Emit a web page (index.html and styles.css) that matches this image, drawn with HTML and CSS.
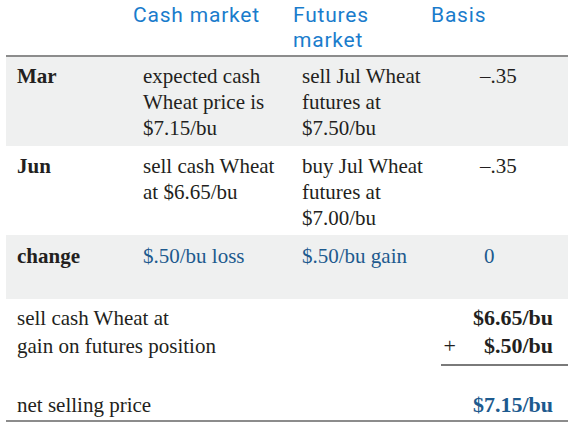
FILE: index.html
```html
<!DOCTYPE html>
<html>
<head>
<meta charset="utf-8">
<link rel="stylesheet" href="styles.css">
</head>
<body>
<div class="sheet">
  <div class="head">
    <div></div>
    <div class="h">Cash market</div>
    <div class="h">Futures<br>market</div>
    <div class="h">Basis</div>
  </div>
  <div class="row shade r-mar">
    <div class="lbl">Mar</div>
    <div>expected cash<br>Wheat price is<br>$7.15/bu</div>
    <div>sell Jul Wheat<br>futures at<br>$7.50/bu</div>
    <div class="basis">–.35</div>
  </div>
  <div class="row r-jun">
    <div class="lbl">Jun</div>
    <div>sell cash Wheat<br>at $6.65/bu</div>
    <div>buy Jul Wheat<br>futures at<br>$7.00/bu</div>
    <div class="basis">–.35</div>
  </div>
  <div class="row shade r-chg">
    <div class="lbl">change</div>
    <div class="blue">$.50/bu loss</div>
    <div class="blue">$.50/bu gain</div>
    <div class="basis blue zero">0</div>
  </div>
  <div class="summary">
    <div class="sline">
      <span>sell cash Wheat at</span>
      <span class="val">$6.65/bu</span>
    </div>
    <div class="sline">
      <span>gain on futures position</span>
      <span class="val"><span class="plus">+</span>$.50/bu</span>
    </div>
    <div class="rule"></div>
    <div class="sline total">
      <span>net selling price</span>
      <span class="val blue">$7.15/bu</span>
    </div>
  </div>
</div>
</body>
</html>
```

FILE: styles.css
```css
html, body {
  margin: 0;
  padding: 0;
  background: #ffffff;
}

body {
  font-family: "Liberation Serif", "Times New Roman", serif;
  color: #231f20;
  font-size: 21px;
}

.sheet {
  margin-left: 6px;
  width: 562px;
}

.head {
  display: grid;
  grid-template-columns: 127px 160px 138px 1fr;
  height: 55px;
  box-sizing: border-box;
  padding-top: 3px;
  font-family: "Roboto", "Liberation Sans", sans-serif;
  font-size: 21px;
  letter-spacing: 0.8px;
  line-height: 25px;
  color: #1a7ccc;
}

.row {
  display: grid;
  grid-template-columns: 137px 159px 177px 1fr;
  line-height: 26px;
  box-sizing: border-box;
}

.row .lbl {
  padding-left: 11px;
  font-weight: bold;
}

.shade {
  background: #eff0f0;
}

.r-mar {
  border-top: 2px solid #8c8c8c;
  padding-top: 6px;
  padding-bottom: 5px;
}

.r-jun {
  padding-top: 7px;
  padding-bottom: 4px;
}

.r-chg {
  padding-top: 8px;
  padding-bottom: 30px;
}

.basis {
  padding-left: 1px;
}

.zero {
  padding-left: 5px;
}

.blue {
  color: #1d5a8e;
}

.summary {
  padding-top: 5px;
  border-bottom: 2px solid #8c8c8c;
  padding-bottom: 1px;
}

.sline {
  display: flex;
  justify-content: space-between;
  line-height: 28px;
  padding-left: 11px;
  padding-right: 15px;
}

.val {
  font-weight: bold;
  font-size: 22px;
}

.plus {
  font-weight: normal;
  margin-right: 28px;
}

.rule {
  margin-top: 4px;
  margin-left: 435px;
  height: 2px;
  background: #7a7a7a;
  margin-bottom: 25px;
}
```
